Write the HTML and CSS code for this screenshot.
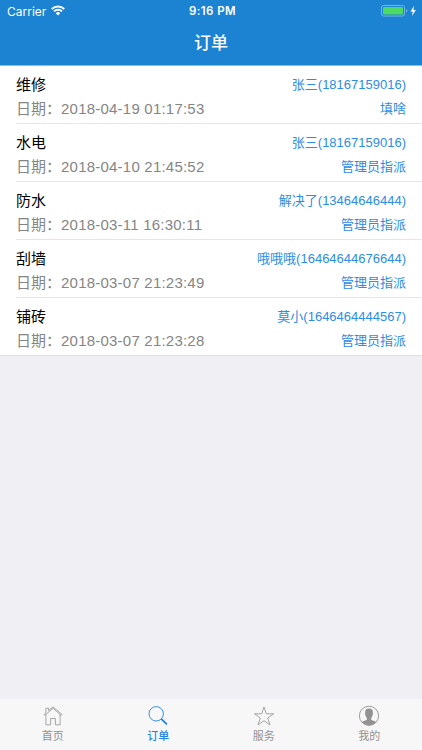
FILE: index.html
```html
<!DOCTYPE html>
<html lang="zh-CN">
<head>
  <meta charset="UTF-8">
  <meta name="viewport" content="width=device-width, initial-scale=1">
  <title>订单</title>
  <link rel="stylesheet" href="styles.css">
</head>
<body>
  <header class="header">
    <div class="status-bar">
      <div class="carrier">
        <span>Carrier</span>
        <svg class="wifi" width="14" height="11" viewBox="0 0 14 11" fill="none" stroke="#fff" stroke-width="1.9">
          <path d="M.8 4a8.8 8.8 0 0 1 12.4 0"/>
          <path d="M3 6.4a5.7 5.7 0 0 1 8 0"/>
          <path d="M7 10.4 4.8 8.2a3.1 3.1 0 0 1 4.4 0z" fill="#fff" stroke="none"/>
        </svg>
      </div>
      <div class="time">9:16 PM</div>
      <div class="battery">
        <svg width="37" height="12" viewBox="0 0 37 12">
          <rect x=".5" y=".5" width="23" height="10.5" rx="2" fill="none" stroke="#77b6e8"/>
          <rect x="2" y="2" width="20" height="7.5" rx=".8" fill="#4cd964"/>
          <path d="M25 4v3.6q1.3-.5 1.3-1.8T25 4z" fill="#77b6e8"/>
          <path d="M33.2.8 29.4 6.4h2.4l-.9 4.6 4-6h-2.5z" fill="#fff"/>
        </svg>
      </div>
    </div>
    <h1 class="title">订单</h1>
  </header>

  <main class="content">
    <ul class="order-list">
      <li class="order">
        <div class="line"><span class="name">维修</span><span class="contact">张三(18167159016)</span></div>
        <div class="line"><span class="date">日期：<span class="value">2018-04-19 01:17:53</span></span><span class="contact">填啥</span></div>
      </li>
      <li class="order">
        <div class="line"><span class="name">水电</span><span class="contact">张三(18167159016)</span></div>
        <div class="line"><span class="date">日期：<span class="value">2018-04-10 21:45:52</span></span><span class="contact">管理员指派</span></div>
      </li>
      <li class="order">
        <div class="line"><span class="name">防水</span><span class="contact">解决了(13464646444)</span></div>
        <div class="line"><span class="date">日期：<span class="value">2018-03-11 16:30:11</span></span><span class="contact">管理员指派</span></div>
      </li>
      <li class="order">
        <div class="line"><span class="name">刮墙</span><span class="contact">哦哦哦(16464644676644)</span></div>
        <div class="line"><span class="date">日期：<span class="value">2018-03-07 21:23:49</span></span><span class="contact">管理员指派</span></div>
      </li>
      <li class="order">
        <div class="line"><span class="name">铺砖</span><span class="contact">莫小(1646464444567)</span></div>
        <div class="line"><span class="date">日期：<span class="value">2018-03-07 21:23:28</span></span><span class="contact">管理员指派</span></div>
      </li>
    </ul>
  </main>

  <nav class="tab-bar">
    <a class="tab">
      <svg width="22" height="22" viewBox="0 0 22 22" fill="none" stroke="currentColor" stroke-width=".8">
        <path d="M2.8 10.4 11 3.3l8.2 7.1.8-.9L11 1.9 6.6 5.6V3.3H3.9v4.6L2 9.5z"/>
        <path d="M3.9 9.6v10.2h4.7v-6.3h4.8v6.3h4.7V9.6"/>
      </svg>
      <span>首页</span>
    </a>
    <a class="tab active">
      <svg width="22" height="22" viewBox="0 0 22 22" fill="none" stroke="currentColor">
        <circle cx="9.2" cy="8.8" r="7.2" stroke-width=".9"/>
        <path d="m14.3 13.8 5.6 5.6" stroke-width="1.8"/>
      </svg>
      <span>订单</span>
    </a>
    <a class="tab">
      <svg width="22" height="22" viewBox="0 0 22 22" fill="none" stroke="currentColor" stroke-width=".8">
        <path d="m11 2 2.3 6.8h7.3l-5.9 4.3 2.3 6.9-6-4.3L5 20l2.3-6.9-5.9-4.3h7.3z"/>
      </svg>
      <span>服务</span>
    </a>
    <a class="tab">
      <svg width="22" height="22" viewBox="0 0 22 22">
        <circle cx="11" cy="10.8" r="9.6" fill="none" stroke="currentColor" stroke-width=".9"/>
        <path d="M8.3 4.2Q11 2.9 13.8 4.2q1.3.9 1 4c.5.4.2 1.8-.4 2.2-.2 1.3-.6 2-1.2 2.6v1.8c.8.9 3.4 1.1 5 2.1a9.6 9.6 0 0 1-14.4 0c1.6-1 4.2-1.2 5-2.1V13c-.6-.6-1-1.3-1.2-2.6-.6-.4-.9-1.8-.4-2.2q-.3-3.1 1.1-4z" fill="currentColor"/>
      </svg>
      <span>我的</span>
    </a>
  </nav>
</body>
</html>
```

FILE: styles.css
```css
* {
  box-sizing: border-box;
}
body {
  margin: 0;
  height: 100vh;
  display: flex;
  flex-direction: column;
  overflow: hidden;
  background-color: #efeff4;
  font-family: "Liberation Sans", "Noto Sans CJK SC", sans-serif;
}
.header {
  height: 66px;
  background-color: #1c82d2;
  border-bottom: 1px solid #7fc0f5;
  color: #fff;
}
.status-bar {
  display: grid;
  grid-template-columns: 1fr auto 1fr;
  align-items: center;
  height: 22px;
  padding: 0 4px 0 7px;
  font-family: Inter, sans-serif;
  font-size: 12px;
}
.carrier {
  display: flex;
  align-items: center;
  gap: 5px;
}
.wifi {
  display: block;
  margin-bottom: 2px;
}
.time {
  font-weight: 600;
  font-size: 11.5px;
  letter-spacing: 0.4px;
}
.battery {
  display: flex;
  justify-content: flex-end;
}
.title {
  margin: 0;
  font-size: 17px;
  font-weight: 500;
  line-height: 44px;
  text-align: center;
}
.content {
  flex: 1;
}
.order-list {
  margin: 0;
  padding: 0;
  list-style: none;
  background-color: #fff;
  border-bottom: 1px solid #dedee2;
}
.order {
  height: 58px;
  margin-left: 16px;
  padding: 7px 16px 0 0;
  border-bottom: 1px solid #e6e6e8;
}
.order:last-child {
  height: 57px;
  border-bottom: none;
}
.line {
  display: flex;
  justify-content: space-between;
  align-items: center;
  height: 24px;
  line-height: 24px;
}
.name {
  font-size: 15px;
  color: #000;
}
.date {
  font-size: 15px;
  color: #858585;
}
.value {
  letter-spacing: 0.22px;
}
.contact {
  font-size: 13px;
  color: #2b8de6;
}
.tab-bar {
  display: flex;
  height: 51px;
  background-color: #f7f7f7;
}
.tab {
  flex: 1;
  display: flex;
  flex-direction: column;
  align-items: center;
  padding-top: 6px;
  font-size: 11px;
  line-height: 18px;
  color: #929292;
}
.tab svg {
  display: block;
}
.tab.active {
  color: #1f82e6;
}
.tab.active span {
  font-weight: 500;
}
```
